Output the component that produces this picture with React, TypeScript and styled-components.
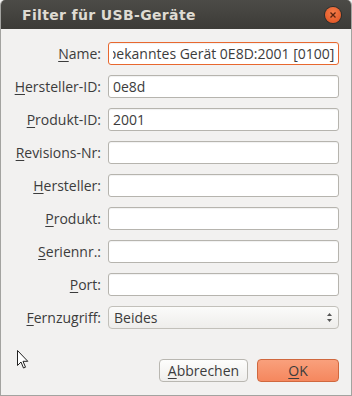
import React, { useEffect, useRef } from "react";
import styled, { createGlobalStyle } from "styled-components";

const Global = createGlobalStyle`
  html, body {
    margin: 0;
    padding: 0;
    background: #f2f1f0;
  }
  body {
    font-family: "Open Sans", "DejaVu Sans", sans-serif;
  }
`;

const Window = styled.div`
  position: relative;
  width: 352px;
  height: 396px;
  box-sizing: border-box;
  background: #f2f1f0;
  border: 1px solid #a3a3a0;
  border-top: none;
  border-radius: 5px 5px 0 0;
  overflow: hidden;
  display: flex;
  flex-direction: column;
`;

const TitleBar = styled.div`
  height: 29px;
  flex: none;
  background: linear-gradient(#4c4b47, #3c3b37);
  display: flex;
  align-items: center;
  justify-content: space-between;
  padding: 0 10px 0 21px;
`;

const Title = styled.span`
  font-family: "DejaVu Sans", sans-serif;
  font-weight: bold;
  font-size: 14px;
  color: #dfdbd2;
  letter-spacing: 0.35px;
`;

const Close = styled.div`
  width: 16px;
  height: 16px;
  border-radius: 50%;
  background: radial-gradient(circle at 50% 35%, #f47d4a, #df4f1e);
  box-shadow: 0 0 0 1px #2e2d2a;
  display: flex;
  align-items: center;
  justify-content: center;
`;

const Body = styled.div`
  flex: 1;
  display: flex;
  flex-direction: column;
  padding: 13px 12px 0 8px;
`;

const Form = styled.div`
  display: grid;
  grid-template-columns: 92px 231px;
  column-gap: 7px;
  row-gap: 10px;
  align-items: center;
`;

const Label = styled.label`
  text-align: right;
  font-size: 14px;
  color: #3c3c3c;
  white-space: nowrap;
  u {
    text-decoration-thickness: 1px;
    text-underline-offset: 2px;
  }
`;

const Field = styled.input<{ $focus?: boolean }>`
  width: 100%;
  height: 23px;
  box-sizing: border-box;
  margin: 0;
  border: 1px solid ${(p) => (p.$focus ? "#e8682f" : "#b6b4ae")};
  border-radius: 3px;
  background: #ffffff;
  box-shadow: inset 0 1px 1px rgba(0, 0, 0, 0.06);
  padding: 0 4px;
  font-family: "Open Sans", "DejaVu Sans", sans-serif;
  font-size: 14px;
  color: #3c3c3c;
  outline: none;
`;

const Combo = styled.div`
  height: 23px;
  box-sizing: border-box;
  border: 1px solid #c2c0ba;
  border-radius: 4px;
  background: linear-gradient(#fbfbfa, #eeedeb);
  display: flex;
  align-items: center;
  justify-content: space-between;
  padding: 0 5px 0 5px;
  font-size: 14px;
  color: #3c3c3c;
`;

const Buttons = styled.div`
  display: flex;
  justify-content: flex-end;
  gap: 9px;
  margin-top: 30px;
`;

const Button = styled.div<{ $primary?: boolean; $w: number }>`
  width: ${(p) => p.$w}px;
  height: 23px;
  box-sizing: border-box;
  border-radius: 4px;
  border: 1px solid ${(p) => (p.$primary ? "#d0683e" : "#b9b7b1")};
  background: ${(p) =>
    p.$primary
      ? "linear-gradient(#f9a07c, #f5875e)"
      : "linear-gradient(#fdfdfc, #efeeec)"};
  display: flex;
  align-items: center;
  justify-content: center;
  font-size: 14px;
  color: #3c3c3c;
  u {
    text-decoration-thickness: 1px;
    text-underline-offset: 2px;
  }
`;

const Pointer = styled.svg`
  position: absolute;
  left: 16px;
  top: 350px;
`;

const rows: { key: string; rest: string; value?: string; focus?: boolean }[] = [
  { key: "N", rest: "ame:", value: "Unbekanntes Gerät 0E8D:2001 [0100]", focus: true },
  { key: "H", rest: "ersteller-ID:", value: "0e8d" },
  { key: "P", rest: "rodukt-ID:", value: "2001" },
  { key: "R", rest: "evisions-Nr:" },
  { key: "H", rest: "ersteller:" },
  { key: "P", rest: "rodukt:" },
  { key: "S", rest: "eriennr.:" },
  { key: "P", rest: "ort:" },
];

function TextField({ value, focus }: { value?: string; focus?: boolean }) {
  const ref = useRef<HTMLInputElement>(null);
  useEffect(() => {
    // the focused entry is scrolled to its end, as in the dialog
    if (focus && ref.current) ref.current.scrollLeft = ref.current.scrollWidth;
  }, [focus]);
  return <Field ref={ref} $focus={focus} readOnly value={value ?? ""} />;
}

export default function App() {
  return (
    <>
      <Global />
      <Window>
        <TitleBar>
          <Title>Filter für USB-Geräte</Title>
          <Close>
            <svg width="8" height="8" viewBox="0 0 8 8">
              <path d="M1.5 1.5 L6.5 6.5 M6.5 1.5 L1.5 6.5" stroke="#5a2410" strokeWidth="1.3" />
            </svg>
          </Close>
        </TitleBar>
        <Body>
          <Form>
            {rows.map((r, i) => (
              <React.Fragment key={i}>
                <Label>
                  <u>{r.key}</u>
                  {r.rest}
                </Label>
                <TextField value={r.value} focus={r.focus} />
              </React.Fragment>
            ))}
            <Label>
              <u>F</u>ernzugriff:
            </Label>
            <Combo>
              <span>Beides</span>
              <svg width="7" height="11" viewBox="0 0 7 11">
                <path d="M3.5 1 L6 4 L1 4 Z" fill="#555" />
                <path d="M3.5 10 L6 7 L1 7 Z" fill="#555" />
              </svg>
            </Combo>
          </Form>
          <Buttons>
            <Button $w={89}>
              <span>
                <u>A</u>bbrechen
              </span>
            </Button>
            <Button $w={82} $primary>
              <span>
                <u>O</u>K
              </span>
            </Button>
          </Buttons>
        </Body>
        <Pointer width="12" height="20" viewBox="0 0 12 20">
          <path
            d="M0.5 0.5 L0.5 15.5 L4 12 L6.5 18 L8.5 17.2 L6 11.3 L10.8 11.3 Z"
            fill="#fff"
            stroke="#222"
            strokeWidth="1"
            strokeLinejoin="round"
          />
        </Pointer>
      </Window>
    </>
  );
}
